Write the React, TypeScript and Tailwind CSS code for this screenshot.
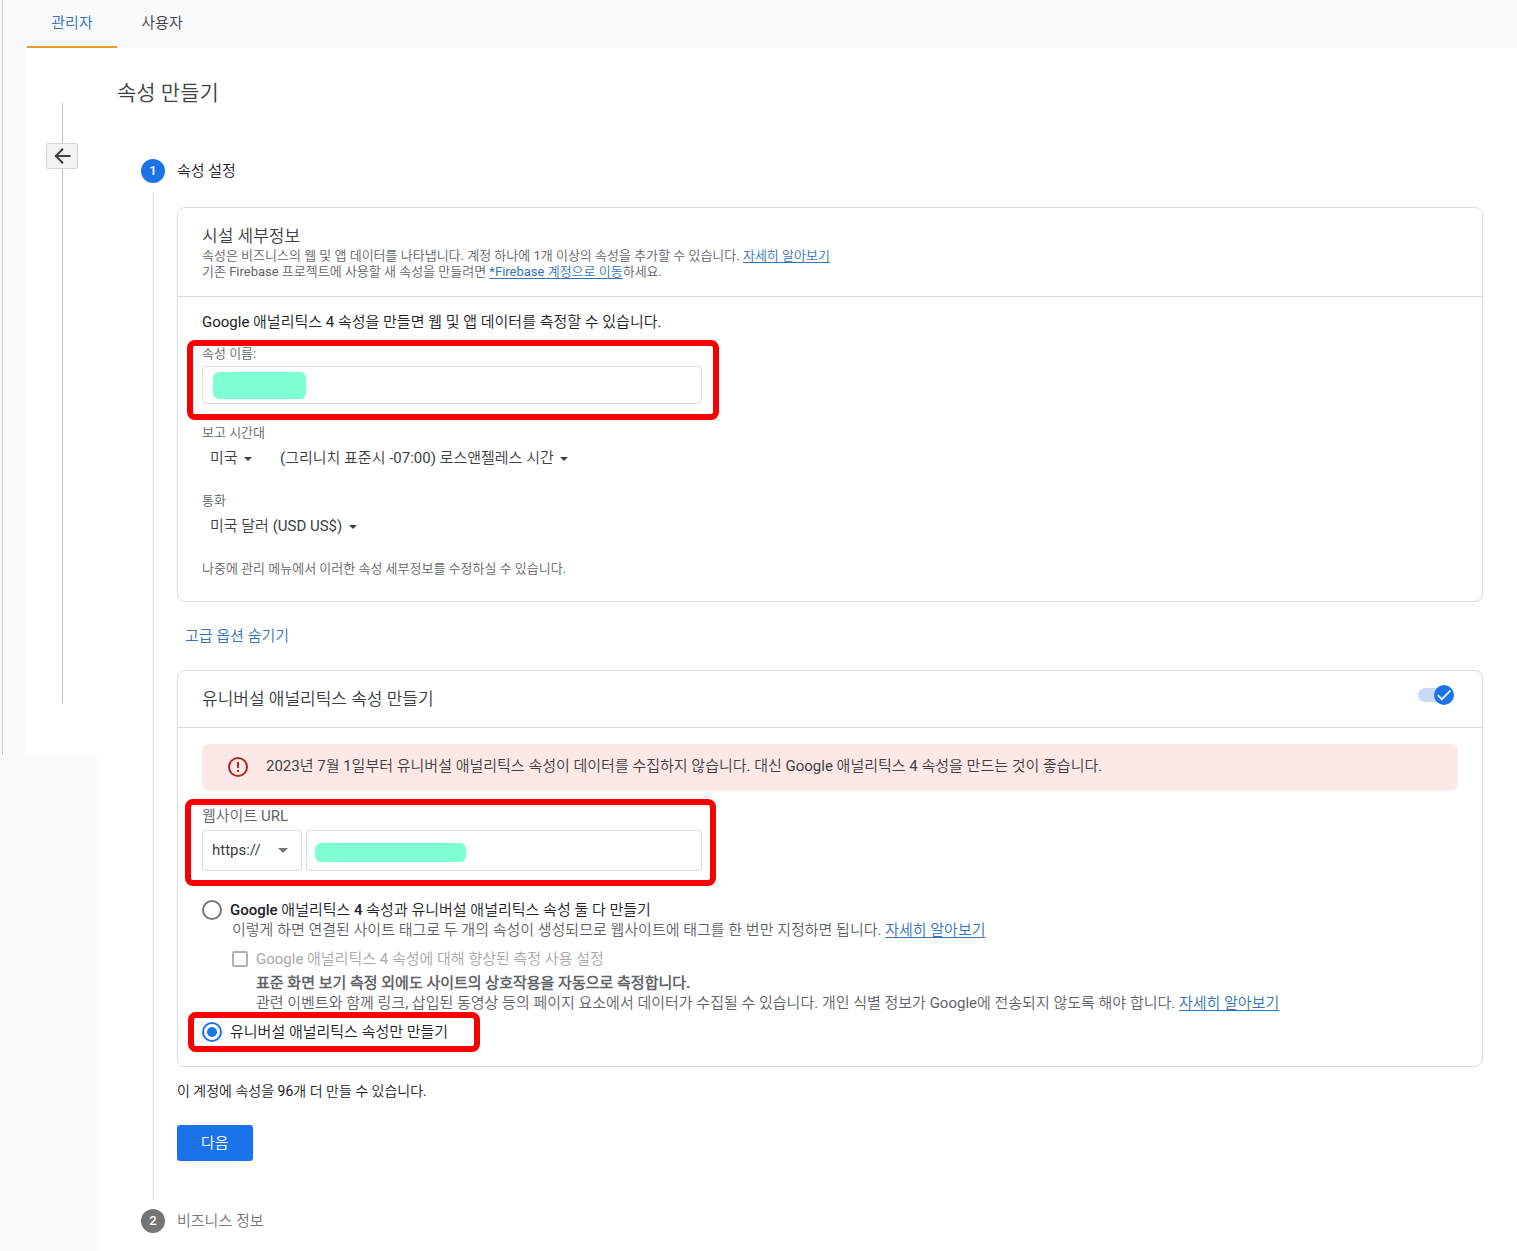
import { useState, type ReactNode, type SelectHTMLAttributes } from 'react'

const tabs = ["관리자", "사용자"]

function Caret({ className }: { className: string }) {
  return (
    <svg viewBox="0 0 10 5" className={className} aria-hidden="true">
      <path d="M0 0h10L5 5z" fill="currentColor" />
    </svg>
  )
}

// borderless select with a small triangle right behind the text
function TextSelect({ children, ...props }: SelectHTMLAttributes<HTMLSelectElement> & { children: ReactNode }) {
  return (
    <span className="relative inline-flex items-center text-[#3c4043]">
      <select {...props} className="appearance-none bg-transparent h-6 pl-2 pr-6 text-[15px] cursor-pointer">
        {children}
      </select>
      <Caret className="absolute right-[10px] top-[11px] w-2 h-1 pointer-events-none" />
    </span>
  )
}

function MoreLink({ children = "자세히 알아보기" }: { children?: ReactNode }) {
  return <a href="#" className="text-[#3373b8] underline underline-offset-2">{children}</a>
}

function Marker({ className }: { className: string }) {
  return <div className={`absolute border-6 border-[#f60000] rounded-lg pointer-events-none ${className}`} />
}

function StepBadge({ value, className }: { value: number, className: string }) {
  return (
    <span className={`flex items-center justify-center size-6 shrink-0 rounded-full text-white text-[13px] font-medium ${className}`}>
      {value}
    </span>
  )
}

function DetailsCard() {
  const [name, setName] = useState("")

  return (
    <section className="mt-6 border border-[#dadce0] rounded-lg">
      <header className="px-6 py-4 border-b border-[#dadce0]">
        <h3 className="text-[17px] leading-6 text-[#3c4043]">시설 세부정보</h3>
        <p className="text-[13px] leading-4 text-[#5f6368]">
          속성은 비즈니스의 웹 및 앱 데이터를 나타냅니다. 계정 하나에 1개 이상의 속성을 추가할 수 있습니다. <MoreLink />
          <br />
          기존 Firebase 프로젝트에 사용할 새 속성을 만들려면 <MoreLink>*Firebase 계정으로 이동</MoreLink>하세요.
        </p>
      </header>
      <div className="px-6 pt-[15px] pb-6">
        <p className="text-[15px] leading-5 text-[#202124]">Google 애널리틱스 4 속성을 만들면 웹 및 앱 데이터를 측정할 수 있습니다.</p>
        <div className="relative mt-[14px] max-w-[500px]">
          <label htmlFor="property-name" className="block text-[13px] leading-4 text-[#5f6368]">속성 이름:</label>
          <div className="relative mt-1">
            <input
              id="property-name"
              type="text"
              value={name}
              onChange={e => setName(e.target.value)}
              className="block w-full h-[38px] px-3 text-[15px] border border-[#dadce0] rounded"
            />
            <div className="absolute left-[11px] top-[6px] w-[93px] h-[27px] rounded-md bg-[#7fffd4]" />
          </div>
          <Marker className="-top-[6px] -left-[15px] -right-[17px] -bottom-4" />
        </div>
        <label htmlFor="country" className="block mt-[21px] text-[13px] leading-4 text-[#5f6368]">보고 시간대</label>
        <div className="flex gap-[10px] mt-[5px]">
          <TextSelect id="country">
            <option>미국</option>
          </TextSelect>
          <TextSelect aria-label="시간대">
            <option>(그리니치 표준시 -07:00) 로스앤젤레스 시간</option>
          </TextSelect>
        </div>
        <label htmlFor="currency" className="block mt-[23px] text-[13px] leading-4 text-[#5f6368]">통화</label>
        <div className="flex mt-[5px]">
          <TextSelect id="currency">
            <option>미국 달러 (USD US$)</option>
          </TextSelect>
        </div>
        <p className="mt-[23px] text-[13px] leading-4 text-[#5f6368]">나중에 관리 메뉴에서 이러한 속성 세부정보를 수정하실 수 있습니다.</p>
      </div>
    </section>
  )
}

function UniversalCard() {
  const [enabled, setEnabled] = useState(true)
  const [url, setUrl] = useState("")
  const [mode, setMode] = useState("ua")

  const radio = "appearance-none size-5 shrink-0 border-2 border-[#757575] rounded-full p-[3px] bg-clip-content checked:border-[#1a73e8] checked:bg-[#1a73e8]"

  return (
    <section className="mt-4 border border-[#dadce0] rounded-lg">
      <header className="flex items-start justify-between pl-6 pr-7 pt-3 pb-4 border-b border-[#dadce0]">
        <h3 className="mt-1 text-[17px] leading-6 text-[#3c4043]">유니버설 애널리틱스 속성 만들기</h3>
        <button
          role="switch"
          aria-checked={enabled}
          aria-label="유니버설 애널리틱스 속성 만들기"
          onClick={() => setEnabled(!enabled)}
          className="flex items-center w-9 h-6 cursor-pointer"
        >
          <svg viewBox="0 0 36 24" className="w-9 h-6">
            <rect x="0" y="5" width="34" height="14" rx="7" fill="#c6dafa" />
            <circle cx={enabled ? 26 : 10} cy="12" r="10" fill="#1a73e8" />
            {enabled && <path d="M19.8 12.2l4 4 8.6-8.6" fill="none" stroke="#fff" strokeWidth="1.7" />}
          </svg>
        </button>
      </header>
      <div className="px-6 pt-4 pb-6">
        <div className="flex items-start gap-4 px-6 pt-3 pb-[15px] rounded-lg bg-[#fce8e6]">
          <svg viewBox="0 0 24 24" className="size-6 -mb-1 shrink-0">
            <circle cx="12" cy="11" r="9" fill="none" stroke="#b3261e" strokeWidth="2" />
            <path d="M11 6h2v6h-2zM11 14h2v2h-2z" fill="#b3261e" />
          </svg>
          <p className="text-[15px] leading-5 text-[#3c4043]">2023년 7월 1일부터 유니버설 애널리틱스 속성이 데이터를 수집하지 않습니다. 대신 Google 애널리틱스 4 속성을 만드는 것이 좋습니다.</p>
        </div>

        <div className="relative mt-[15px] max-w-[500px]">
          <label htmlFor="site-url" className="block text-[15px] leading-5 text-[#5f6368]">웹사이트 URL</label>
          <div className="flex gap-1 mt-1">
            <div className="relative w-[100px] shrink-0">
              <select aria-label="프로토콜" className="appearance-none w-full h-[41px] pl-[9px] text-[15px] text-[#3c4043] border border-[#dadce0] rounded">
                <option>https://</option>
                <option>http://</option>
              </select>
              <Caret className="absolute right-[14px] top-[18px] w-[10px] h-[5px] text-[#757575] pointer-events-none" />
            </div>
            <div className="relative flex-1">
              <input
                id="site-url"
                type="text"
                value={url}
                onChange={e => setUrl(e.target.value)}
                className="block w-full h-[41px] px-3 text-[15px] border border-[#dadce0] rounded"
              />
              <div className="absolute left-[9px] top-[13px] w-[151px] h-[19px] rounded-md bg-[#7fffd4]" />
            </div>
          </div>
          <Marker className="-top-[7px] -left-[17px] -right-[14px] -bottom-[15px]" />
        </div>

        <div className="mt-[29px]">
          <div className="flex gap-2">
            <input id="mode-both" type="radio" name="mode" checked={mode === "both"} onChange={() => setMode("both")} className={radio} />
            <label htmlFor="mode-both" className="text-[15px] leading-5 font-medium text-[#202124]">Google 애널리틱스 4 속성과 유니버설 애널리틱스 속성 둘 다 만들기</label>
          </div>
          <div className="pl-[30px] text-[15px] leading-5 text-[#5f6368]">
            <p>이렇게 하면 연결된 사이트 태그로 두 개의 속성이 생성되므로 웹사이트에 태그를 한 번만 지정하면 됩니다. <MoreLink /></p>
            <div className="flex items-center gap-2 mt-[9px] text-[#a8a8a8]">
              <input id="enhanced" type="checkbox" disabled className="appearance-none size-4 border-2 border-[#b0b0b0] rounded-xs" />
              <label htmlFor="enhanced">Google 애널리틱스 4 속성에 대해 향상된 측정 사용 설정</label>
            </div>
            <div className="pl-6 mt-1">
              <p className="font-bold">표준 화면 보기 측정 외에도 사이트의 상호작용을 자동으로 측정합니다.</p>
              <p>관련 이벤트와 함께 링크, 삽입된 동영상 등의 페이지 요소에서 데이터가 수집될 수 있습니다. 개인 식별 정보가 Google에 전송되지 않도록 해야 합니다. <MoreLink /></p>
            </div>
          </div>
          <div className="relative flex w-fit gap-2 mt-[9px]">
            <input id="mode-ua" type="radio" name="mode" checked={mode === "ua"} onChange={() => setMode("ua")} className={radio} />
            <label htmlFor="mode-ua" className="text-[15px] leading-5 text-[#202124]">유니버설 애널리틱스 속성만 만들기</label>
            <Marker className="-top-[10px] -left-[14px] -right-8 -bottom-[10px]" />
          </div>
        </div>
      </div>
    </section>
  )
}

export default function App() {
  return (
    <div className="min-h-screen flex flex-col bg-[#f8f9fb] font-['Roboto','Noto_Sans_CJK_KR_DemiLight','Noto_Sans_CJK_KR',sans-serif] font-normal">
      <nav className="flex h-12 ml-[2px] pl-6 border-l border-[#ccced1] text-[15px]">
        {tabs.map((tab, i) => (
          <a
            key={tab}
            href="#"
            className={i === 0
              ? "flex items-center justify-center w-[90px] border-b-2 border-[#e8992c] text-[#3373b8]"
              : "flex items-center justify-center w-[90px] border-b-2 border-transparent text-[#3c4043]"}
          >
            {tab}
          </a>
        ))}
      </nav>

      <div className="flex flex-1">
        <aside className="w-[97px] shrink-0">
          <div className="ml-[2px] pl-6 border-l border-[#ccced1]">
            <div className="flex flex-col items-center pt-[55px] pb-[52px] bg-white">
              <div className="w-px h-10 bg-[#c4c4c4]" />
              <button aria-label="뒤로" className="flex items-center justify-center w-8 h-[26px] border border-[#d4d4d4] rounded-xs bg-[#f3f3f3] cursor-pointer">
                <svg viewBox="0 0 18 18" className="size-[18px]">
                  <path d="M17.5 9H2.5M10 1.8L2.8 9L10 16.2" fill="none" stroke="#3c3c3c" strokeWidth="2" />
                </svg>
              </button>
              <div className="w-px h-[534px] bg-[#c4c4c4]" />
            </div>
          </div>
        </aside>

        <main className="flex-1 min-w-0 pt-[31px] pl-5 pr-[34px] bg-white">
          <h1 className="text-[21px] leading-7 text-[#3c4043]">속성 만들기</h1>
          <ol className="mt-[52px] pl-6">
            <li className="flex gap-3">
              <div className="flex flex-col items-center">
                <StepBadge value={1} className="bg-[#1a73e8]" />
                <div className="w-px flex-1 my-[9px] bg-[#dadce0]" />
              </div>
              <div className="flex-1 min-w-0 pb-12">
                <h2 className="text-[15px] leading-6 text-[#202124]">속성 설정</h2>
                <DetailsCard />
                <button className="block h-9 mt-4 px-2 text-[15px] text-[#3373b8] cursor-pointer">고급 옵션 숨기기</button>
                <UniversalCard />
                <p className="mt-[14px] text-[14px] leading-5 text-[#202124]">이 계정에 속성을 96개 더 만들 수 있습니다.</p>
                <button className="block mt-6 h-9 px-6 text-[15px] text-white bg-[#1a73e8] rounded-[3px] cursor-pointer">다음</button>
              </div>
            </li>
            <li className="flex gap-3">
              <StepBadge value={2} className="bg-[#757575]" />
              <h2 className="text-[15px] leading-6 text-[#757575]">비즈니스 정보</h2>
            </li>
          </ol>
        </main>
      </div>
    </div>
  )
}
